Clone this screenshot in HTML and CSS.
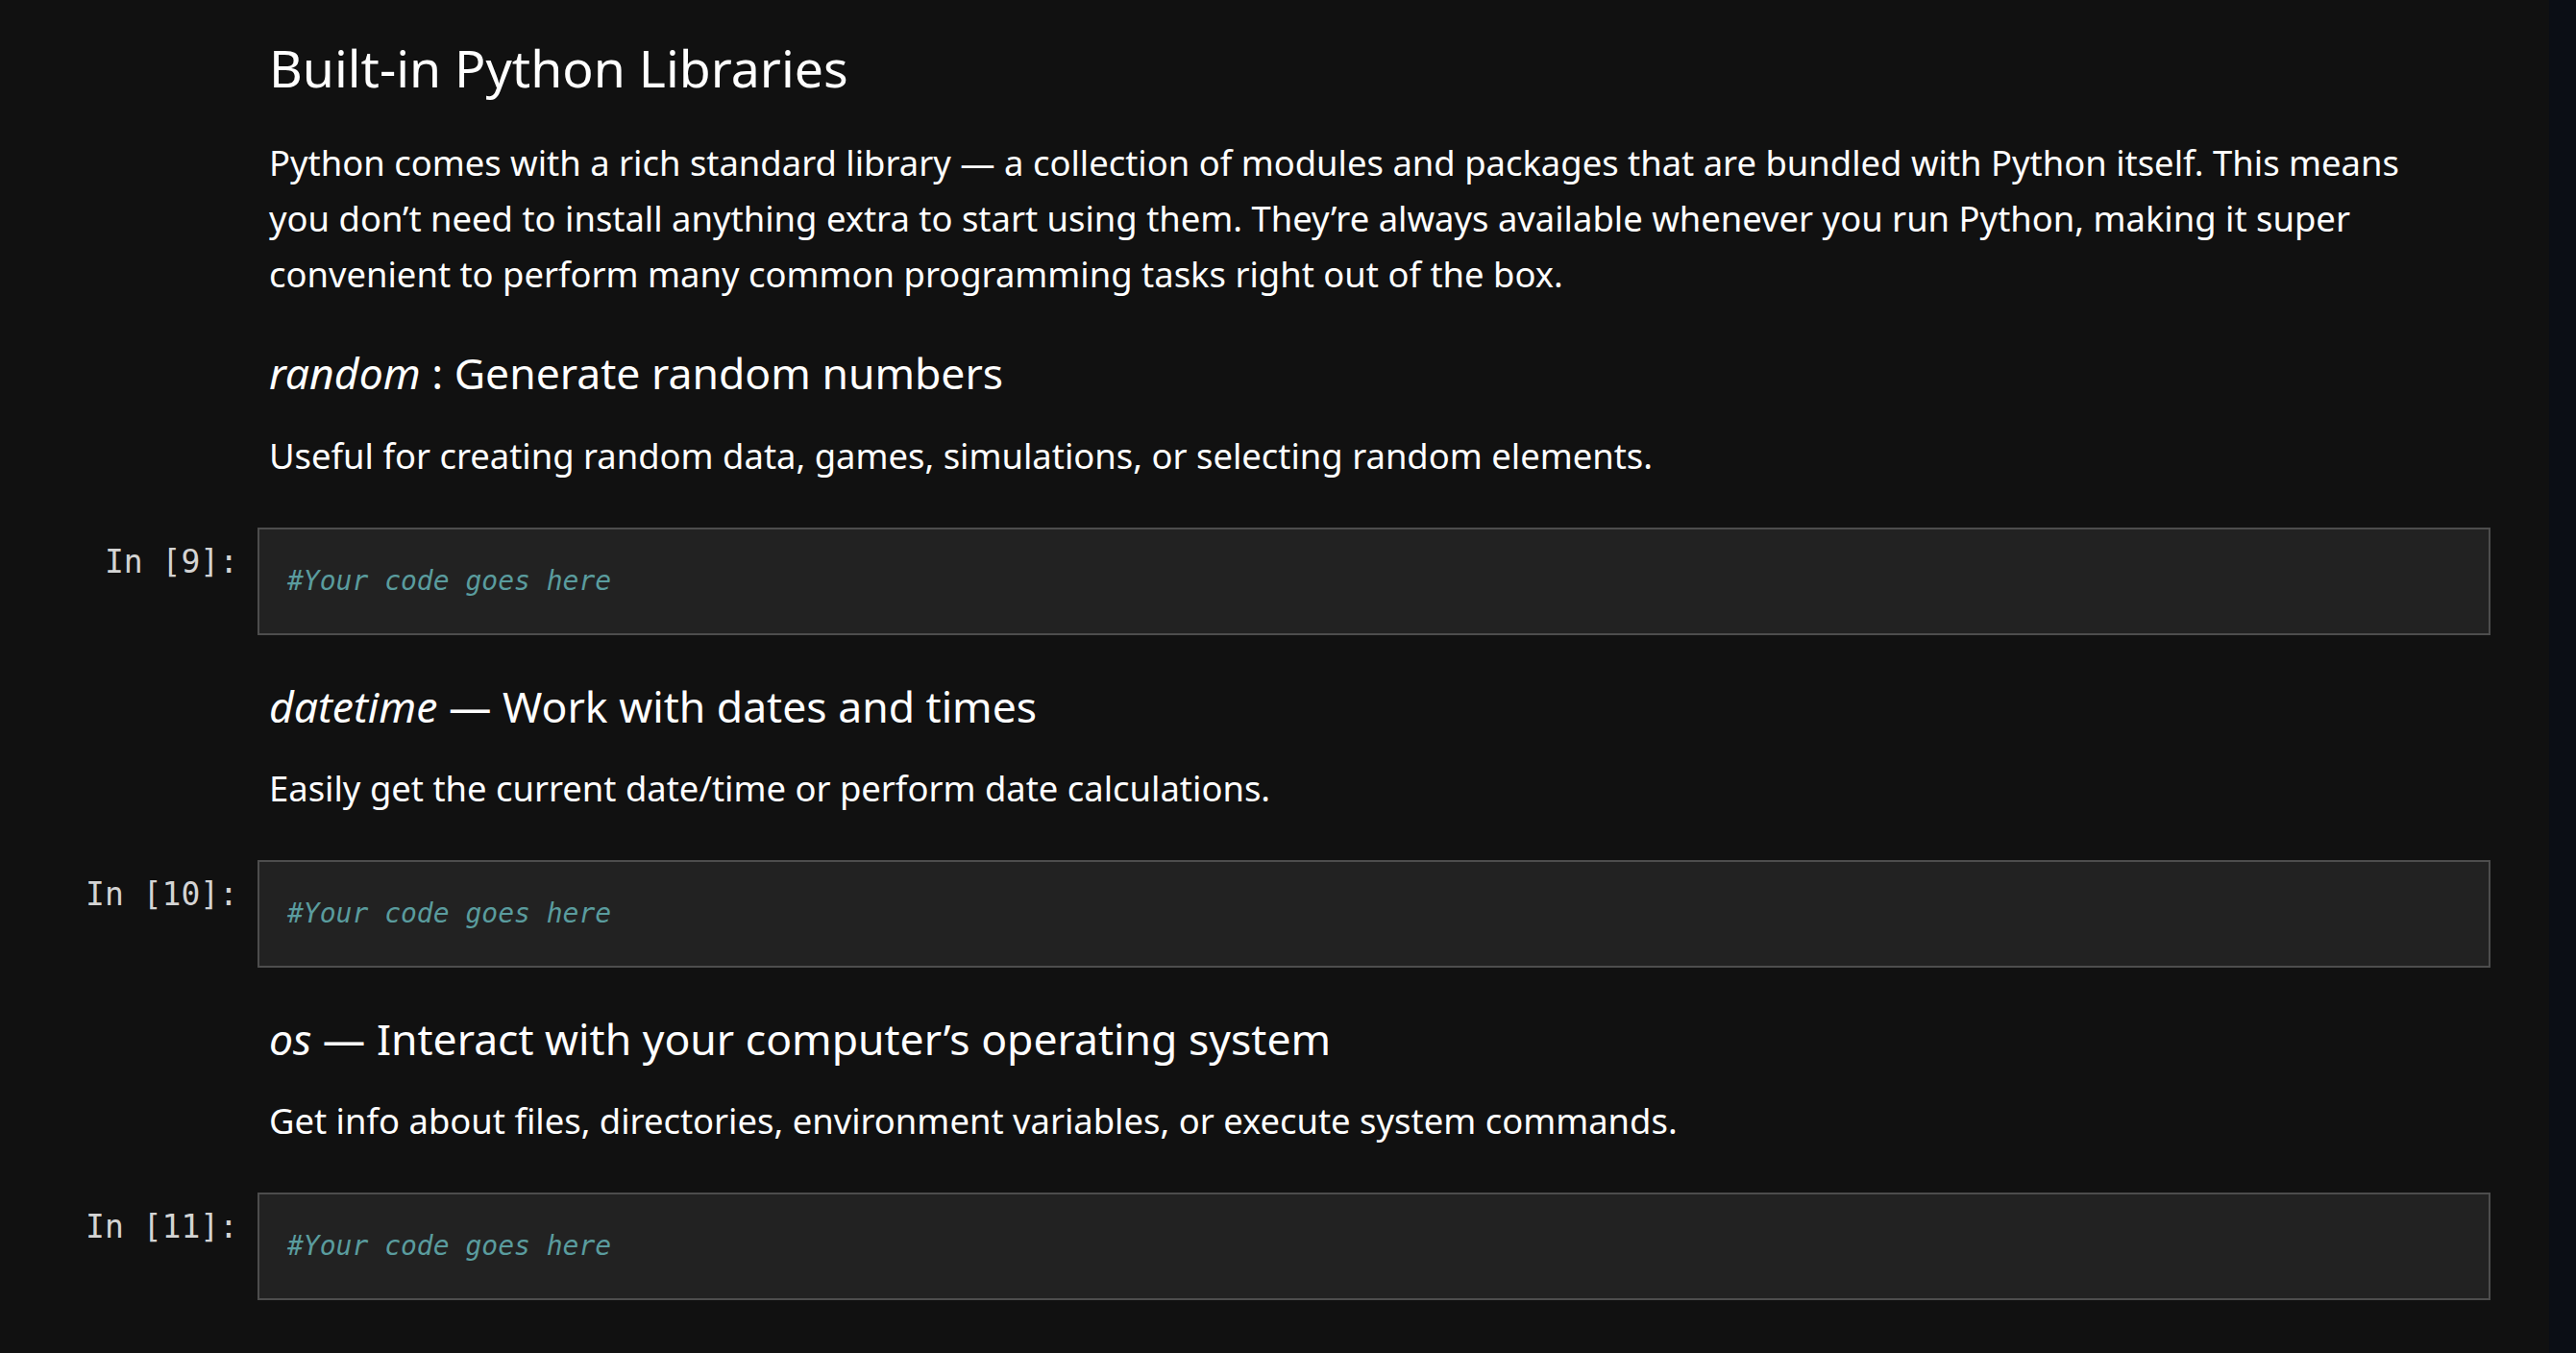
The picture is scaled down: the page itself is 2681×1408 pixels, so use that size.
FILE: index.html
```html
<!DOCTYPE html>
<html lang="en">
<head>
<meta charset="utf-8">
<title>Built-in Python Libraries</title>
<link rel="stylesheet" href="styles.css">
</head>
<body>
<div class="page">
  <main class="notebook">
    <div class="cell md">
      <div class="prompt"></div>
      <div class="md-body">
        <h2 class="title">Built-in Python Libraries</h2>
        <p class="text intro">Python comes with a rich standard library — a collection of modules and packages that are bundled with Python itself. This means you don’t need to install anything extra to start using them. They’re always available whenever you run Python, making it super convenient to perform many common programming tasks right out of the box.</p>
        <h3 class="sub first"><em>random</em> : Generate random numbers</h3>
        <p class="text">Useful for creating random data, games, simulations, or selecting random elements.</p>
      </div>
    </div>
    <div class="cell code">
      <div class="prompt">In [9]:</div>
      <div class="input"><span class="comment">#Your code goes here</span></div>
    </div>
    <div class="cell md">
      <div class="prompt"></div>
      <div class="md-body">
        <h3 class="sub"><em>datetime</em> — Work with dates and times</h3>
        <p class="text">Easily get the current date/time or perform date calculations.</p>
      </div>
    </div>
    <div class="cell code">
      <div class="prompt">In [10]:</div>
      <div class="input"><span class="comment">#Your code goes here</span></div>
    </div>
    <div class="cell md">
      <div class="prompt"></div>
      <div class="md-body">
        <h3 class="sub"><em>os</em> — Interact with your computer’s operating system</h3>
        <p class="text">Get info about files, directories, environment variables, or execute system commands.</p>
      </div>
    </div>
    <div class="cell code">
      <div class="prompt">In [11]:</div>
      <div class="input"><span class="comment">#Your code goes here</span></div>
    </div>
  </main>
  <div class="scrolltrack"></div>
</div>
</body>
</html>
```
FILE: styles.css
```css
html, body {
  margin: 0;
  padding: 0;
  background: #111111;
  height: 100%;
  overflow: hidden;
}

.page {
  display: flex;
  height: 100vh;
}

.notebook {
  flex: 1;
  padding: 38px 61px 0 0;
  display: flex;
  flex-direction: column;
}

.scrolltrack {
  width: 28px;
  background: #0b0e15;
}

.cell {
  display: flex;
  align-items: flex-start;
}

.prompt {
  width: 268px;
  flex: none;
  box-sizing: border-box;
  padding: 16px 20px 0 0;
  text-align: right;
  font-family: "DejaVu Sans Mono", monospace;
  font-size: 33px;
  line-height: 40px;
  color: #d4d4d4;
  white-space: pre;
}

.md-body {
  flex: 1;
  padding: 0 60px 0 12px;
  font-family: "Noto Sans", "Open Sans", sans-serif;
  color: #ffffff;
}

.title {
  margin: 0 0 36px;
  font-size: 53.6px;
  line-height: 66px;
  font-weight: 400;
}

.text {
  margin: 0;
  font-size: 36.4px;
  line-height: 58px;
}

.sub {
  margin: 48px 0 30px;
  font-size: 44.5px;
  line-height: 52px;
  font-weight: 400;
}

.sub.first {
  margin-bottom: 31px;
}

.sub em {
  font-style: italic;
}

.cell.code {
  margin-top: 46px;
}

.input {
  flex: 1;
  background: #222222;
  border: 2px solid #4d4d4d;
  padding: 34px 29px;
  font-family: "DejaVu Sans Mono", monospace;
  font-size: 28px;
  line-height: 40px;
}

.comment {
  font-style: italic;
  color: #5a9c9e;
}
```
